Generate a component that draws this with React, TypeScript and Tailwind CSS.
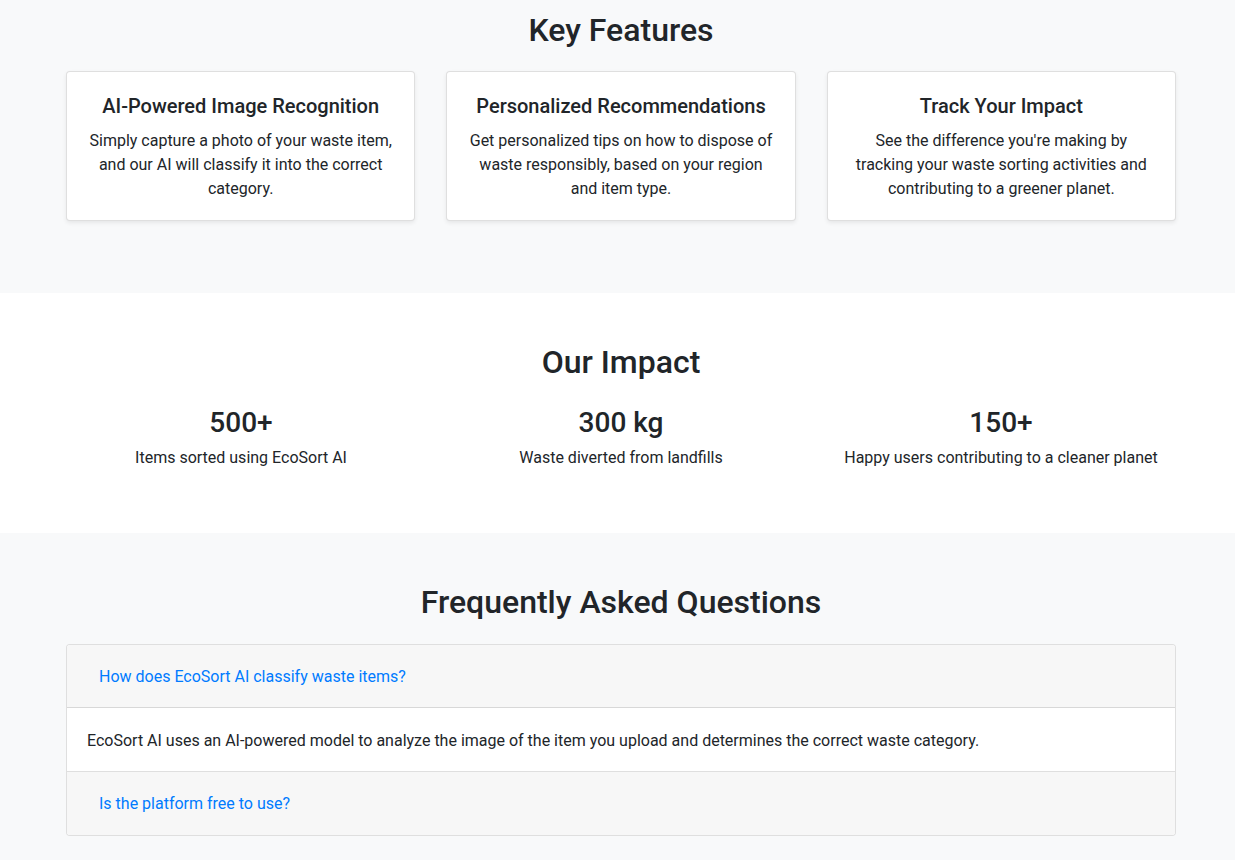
import React from "react";

const features = [
  {
    title: "AI-Powered Image Recognition",
    text: "Simply capture a photo of your waste item, and our AI will classify it into the correct category.",
  },
  {
    title: "Personalized Recommendations",
    text: "Get personalized tips on how to dispose of waste responsibly, based on your region and item type.",
  },
  {
    title: "Track Your Impact",
    text: "See the difference you're making by tracking your waste sorting activities and contributing to a greener planet.",
  },
];

const stats = [
  { value: "500+", label: "Items sorted using EcoSort AI" },
  { value: "300 kg", label: "Waste diverted from landfills" },
  { value: "150+", label: "Happy users contributing to a cleaner planet" },
];

const App = () => {
  return (
    <div
      className="w-full min-h-[860px] bg-[#f8f9fa] text-[#212529] text-base leading-6"
      style={{ fontFamily: '"Segoe UI", Roboto, "Liberation Sans", sans-serif' }}
    >
      {/* Key features */}
      <section className="bg-[#f8f9fa] pt-[11px] h-[293px]">
        <div className="w-[1110px] ml-[66px]">
          <h2 className="text-[32px] leading-[38px] font-medium text-center mb-[22px]">Key Features</h2>
          <div className="grid grid-cols-3 gap-[31px]">
            {features.map((f) => (
              <div
                key={f.title}
                className="bg-white border border-black/[0.125] rounded shadow-[0_2px_4px_rgba(0,0,0,0.075)] px-5 pt-[22px] pb-[19px] text-center"
              >
                <h5 className="text-xl leading-6 font-medium mb-[11px]">{f.title}</h5>
                <p>{f.text}</p>
              </div>
            ))}
          </div>
        </div>
      </section>

      {/* Impact */}
      <section className="bg-white pt-[50px] h-[240px]">
        <div className="w-[1140px] ml-[51px]">
          <h2 className="text-[32px] leading-[38px] font-medium text-center mb-[25px]">Our Impact</h2>
          <div className="grid grid-cols-3">
            {stats.map((s) => (
              <div key={s.value} className="text-center">
                <h3 className="text-[28px] leading-[34px] font-medium mb-[6px]">{s.value}</h3>
                <p>{s.label}</p>
              </div>
            ))}
          </div>
        </div>
      </section>

      {/* FAQ */}
      <section className="bg-[#f8f9fa] pt-[50px] pb-6">
        <div className="w-[1110px] ml-[66px]">
          <h2 className="text-[32px] leading-[38px] font-medium text-center mb-[23px]">
            Frequently Asked Questions
          </h2>
          <div className="bg-white border border-black/[0.125] rounded overflow-hidden">
            <div className="bg-[#f7f7f7] border-b border-black/[0.125] px-5 py-3">
              <button className="block px-3 pt-[8px] pb-[6px] text-[#007bff] leading-6">
                How does EcoSort AI classify waste items?
              </button>
            </div>
            <div className="px-5 pt-[21px] pb-[18px] border-b border-black/[0.125]">
              EcoSort AI uses an AI-powered model to analyze the image of the item you upload and determines
              the correct waste category.
            </div>
            <div className="bg-[#f7f7f7] px-5 pt-3 pb-[13px]">
              <button className="block px-3 pt-[8px] pb-[6px] text-[#007bff] leading-6">
                Is the platform free to use?
              </button>
            </div>
          </div>
        </div>
      </section>
    </div>
  );
};

export default App;
